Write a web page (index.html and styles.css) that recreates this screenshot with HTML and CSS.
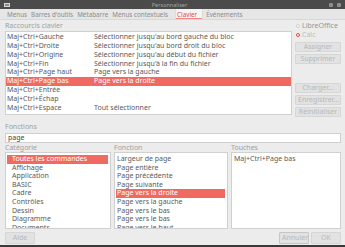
FILE: index.html
```html
<!DOCTYPE html>
<html lang="fr">
<head>
    <meta charset="UTF-8">
    <title>Personnaliser</title>
    <link rel="stylesheet" href="styles.css">
</head>
<body>
<div class="window">
    <div class="titlebar">
        <span class="win-icon"></span>
        <span class="win-title">Personnaliser</span>
        <span class="win-btns"><span class="wb"></span><span class="wb"></span></span>
    </div>
    <div class="tabs">
        <span class="tab">Menus</span>
        <span class="tab">Barres d'outils</span>
        <span class="tab">Métabarre</span>
        <span class="tab">Menus contextuels</span>
        <span class="tab tab-active">Clavier</span>
        <span class="tab">Événements</span>
    </div>
    <div class="content">
        <div class="top">
            <div class="shortcuts">
                <div class="caption">Raccourcis clavier</div>
                <div class="listbox keys">
                    <div class="row"><span class="k">Maj+Ctrl+Gauche</span><span>Sélectionner jusqu'au bord gauche du bloc</span></div>
                    <div class="row"><span class="k">Maj+Ctrl+Droite</span><span>Sélectionner jusqu'au bord droit du bloc</span></div>
                    <div class="row"><span class="k">Maj+Ctrl+Origine</span><span>Sélectionner jusqu'au début du fichier</span></div>
                    <div class="row"><span class="k">Maj+Ctrl+Fin</span><span>Sélectionner jusqu'à la fin du fichier</span></div>
                    <div class="row"><span class="k">Maj+Ctrl+Page haut</span><span>Page vers la gauche</span></div>
                    <div class="row sel"><span class="k">Maj+Ctrl+Page bas</span><span>Page vers la droite</span></div>
                    <div class="row"><span class="k">Maj+Ctrl+Entrée</span><span></span></div>
                    <div class="row"><span class="k">Maj+Ctrl+Échap</span><span></span></div>
                    <div class="row"><span class="k">Maj+Ctrl+Espace</span><span>Tout sélectionner</span></div>
                </div>
            </div>
            <div class="side">
                <div class="radio"><span class="dot"></span>LibreOffice</div>
                <div class="radio radio-on"><span class="dot"></span>Calc</div>
                <button class="btn btn-first">Assigner</button>
                <button class="btn">Supprimer</button>
                <button class="btn btn-gap">Charger...</button>
                <button class="btn">Enregistrer...</button>
                <button class="btn">Réinitialiser</button>
            </div>
        </div>
        <div class="caption cap-fn">Fonctions</div>
        <div class="search">page</div>
        <div class="lists">
            <div class="col cat">
                <div class="caption">Catégorie</div>
                <div class="listbox small">
                    <div class="item sel">Toutes les commandes</div>
                    <div class="item">Affichage</div>
                    <div class="item">Application</div>
                    <div class="item">BASIC</div>
                    <div class="item">Cadre</div>
                    <div class="item">Contrôles</div>
                    <div class="item">Dessin</div>
                    <div class="item">Diagramme</div>
                    <div class="item">Documents</div>
                </div>
            </div>
            <div class="col">
                <div class="caption">Fonction</div>
                <div class="listbox small">
                    <div class="item">Largeur de page</div>
                    <div class="item">Page entière</div>
                    <div class="item">Page précédente</div>
                    <div class="item">Page suivante</div>
                    <div class="item sel">Page vers la droite</div>
                    <div class="item">Page vers la gauche</div>
                    <div class="item">Page vers le bas</div>
                    <div class="item">Page vers le bas</div>
                    <div class="item">Page vers le haut</div>
                </div>
            </div>
            <div class="col">
                <div class="caption">Touches</div>
                <div class="listbox small">
                    <div class="item">Maj+Ctrl+Page bas</div>
                </div>
            </div>
        </div>
    </div>
    <div class="footer">
        <button class="btn">Aide</button>
        <span class="spacer"></span>
        <button class="btn btn-border">Annuler</button>
        <button class="btn">OK</button>
    </div>
</div>
</body>
</html>
```

FILE: styles.css
```css
* {
    box-sizing: border-box;
}
body {
    margin: 0;
    font-family: 'Noto Sans', sans-serif;
    font-size: 7px;
    color: #5a5a5a;
    background-color: #3a3a3a;
}
.window {
    width: 345px;
    height: 245px;
    background-color: #ececec;
    display: flex;
    flex-direction: column;
    overflow: hidden;
}
.titlebar {
    height: 9px;
    flex: none;
    background-color: #4b4b4b;
    display: flex;
    align-items: center;
    padding: 0 4px 0 4px;
    color: #a5a5a5;
    font-size: 5.5px;
}
.win-icon {
    width: 6px;
    height: 4px;
    border: 1px solid #d6d6d6;
    background-color: #8a8a8a;
}
.win-title {
    flex: 1;
    text-align: center;
}
.win-btns {
    display: flex;
    gap: 4px;
}
.wb {
    width: 4px;
    height: 4px;
    background-color: #8e8e8e;
    border-radius: 1px;
}
.tabs {
    height: 11px;
    flex: none;
    display: flex;
    padding-left: 5px;
    font-size: 6.3px;
    color: #8c8c8c;
    background-color: #e6e6e6;
    border-bottom: 1px solid #d8d8d8;
}
.tab {
    padding: 0 2px;
    line-height: 11px;
    white-space: nowrap;
}
.tab-active {
    margin-left: 5px;
    margin-right: 1px;
    padding: 0 5px 0 1px;
    color: #e24a3f;
    background-color: #f4f4f4;
    border-left: 1px solid #dcdcdc;
    border-right: 1px solid #dcdcdc;
    box-shadow: inset 0 -1px 0 #ee8a82;
}
.content {
    padding: 0 4px 0 5px;
    flex: none;
    display: flex;
    flex-direction: column;
}
.caption {
    color: #a0a0a0;
    height: 9px;
    line-height: 9px;
    white-space: nowrap;
}
.top {
    display: flex;
    gap: 3px;
    padding-top: 1px;
}
.shortcuts {
    flex: 1;
}
.listbox {
    background-color: #ffffff;
    border: 1px solid #d0d0d0;
    overflow: hidden;
}
.keys {
    margin-top: 1px;
    height: 84px;
    padding-top: 1px;
}
.row {
    display: flex;
    height: 8.85px;
    line-height: 8.85px;
    padding-left: 1px;
    white-space: nowrap;
}
.row .k {
    width: 87px;
}
.sel {
    background-color: #f16a61;
    color: #ffffff;
}
.side {
    width: 46px;
    display: flex;
    flex-direction: column;
}
.radio {
    display: flex;
    align-items: center;
    gap: 2px;
    color: #969696;
    height: 9px;
    line-height: 9px;
    padding-left: 1px;
}
.dot {
    width: 4px;
    height: 4px;
    border: 1px solid #cfcfcf;
    border-radius: 50%;
    background-color: #fff;
}
.radio-on {
    color: #bdbdbd;
}
.radio-on .dot {
    border: 1.5px solid #e0463b;
}
.btn {
    font-family: inherit;
    font-size: 7px;
    color: #b8b8b8;
    background-color: #e2e2e2;
    border: 1px solid #d6d6d6;
    border-radius: 1px;
    height: 10px;
    padding: 0 2px;
    margin: 0 0 2px;
    line-height: 8px;
    white-space: nowrap;
}
.btn-first {
    margin-top: 3px;
}
.btn-gap {
    margin-top: 17px;
}
.cap-fn {
    margin-top: 3px;
}
.search {
    background-color: #ffffff;
    border: 1px solid #d0d0d0;
    height: 10px;
    line-height: 8px;
    padding-left: 2px;
    margin: 2px 0 0;
    color: #444;
}
.lists {
    display: grid;
    grid-template-columns: 106px 114px 1fr;
    gap: 3px;
    margin-top: 1px;
}
.lists .caption {
    height: 8px;
    line-height: 7px;
}
.small {
    height: 77px;
    padding: 2px 2px 0 1px;
}
.item {
    height: 8.6px;
    line-height: 8.6px;
    padding-left: 1px;
    white-space: nowrap;
}
.cat .item {
    padding-left: 5px;
}
.footer {
    flex: 1;
    display: flex;
    align-items: center;
    gap: 2px;
    padding: 1px 4px 0 5px;
}
.footer .btn {
    width: 30px;
    height: 12px;
    margin: 0;
}
.btn-border {
    border-color: #c6c6c6;
}
.spacer {
    flex: 1;
}
```
